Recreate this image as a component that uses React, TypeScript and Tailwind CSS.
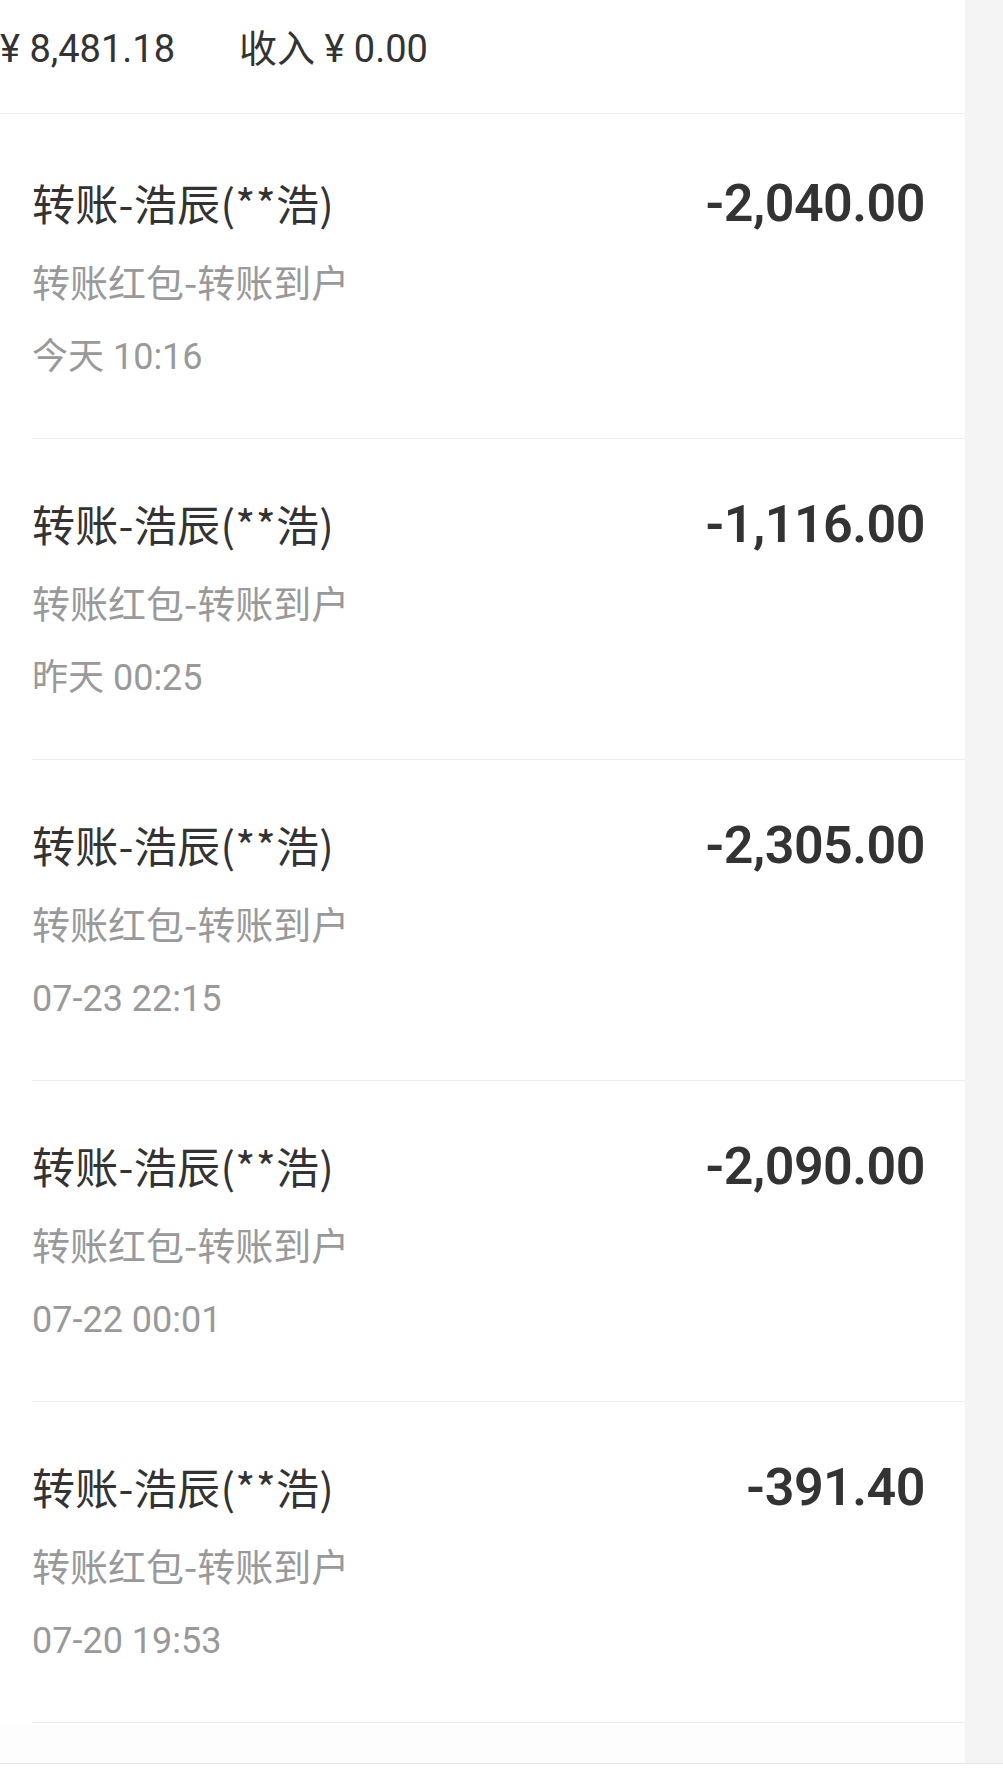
const rows = [
  { title: "转账-浩辰(**浩)", sub: "转账红包-转账到户", time: "今天 10:16", amount: "-2,040.00" },
  { title: "转账-浩辰(**浩)", sub: "转账红包-转账到户", time: "昨天 00:25", amount: "-1,116.00" },
  { title: "转账-浩辰(**浩)", sub: "转账红包-转账到户", time: "07-23 22:15", amount: "-2,305.00" },
  { title: "转账-浩辰(**浩)", sub: "转账红包-转账到户", time: "07-22 00:01", amount: "-2,090.00" },
  { title: "转账-浩辰(**浩)", sub: "转账红包-转账到户", time: "07-20 19:53", amount: "-391.40" },
];

export default function App() {
  return (
    <div className="w-[1003px] min-h-[1791px] bg-white font-['Roboto','Noto_Sans_CJK_SC',sans-serif]">
      <div className="flex border-b border-[#e6e6e6]">
        <div className="w-[965px] shrink-0">
          {/* summary */}
          <div className="h-[114px] border-b border-[#ececec] flex items-start pt-[19px] text-[38px] leading-[60px] text-[#333]">
            <span>¥ 8,481.18</span>
            <span className="ml-[64px]">收入 ¥ 0.00</span>
          </div>

          <div className="pt-[4px]">
            {rows.map((r, i) => (
              <div key={i} className="ml-[32px] border-b border-[#ececec] h-[321px] pt-[54px]">
                <div className="flex items-start justify-between pr-[40px]">
                  <div className="text-[43px] leading-[60px] h-[60px] tracking-[0.3px] text-[#333] font-['Noto_Sans_CJK_SC',sans-serif]">
                    {r.title}
                  </div>
                  <div className="mt-[2px] text-[52px] leading-[60px] font-semibold tracking-[-0.5px] text-[#333] font-['Roboto',sans-serif]">
                    {r.amount}
                  </div>
                </div>
                <div className="mt-[17px] h-[60px] leading-[60px] text-[38px] text-[#999] font-['Noto_Sans_CJK_SC',sans-serif]">
                  {r.sub}
                </div>
                <div className="mt-[16px] h-[60px] leading-[60px] text-[36px] text-[#999]">
                  {r.time}
                </div>
              </div>
            ))}
          </div>
          <div className="h-[40px] bg-[#fdfdfd]" />
        </div>
        <div className="flex-1 bg-[#f4f4f4]" />
      </div>
    </div>
  );
}
